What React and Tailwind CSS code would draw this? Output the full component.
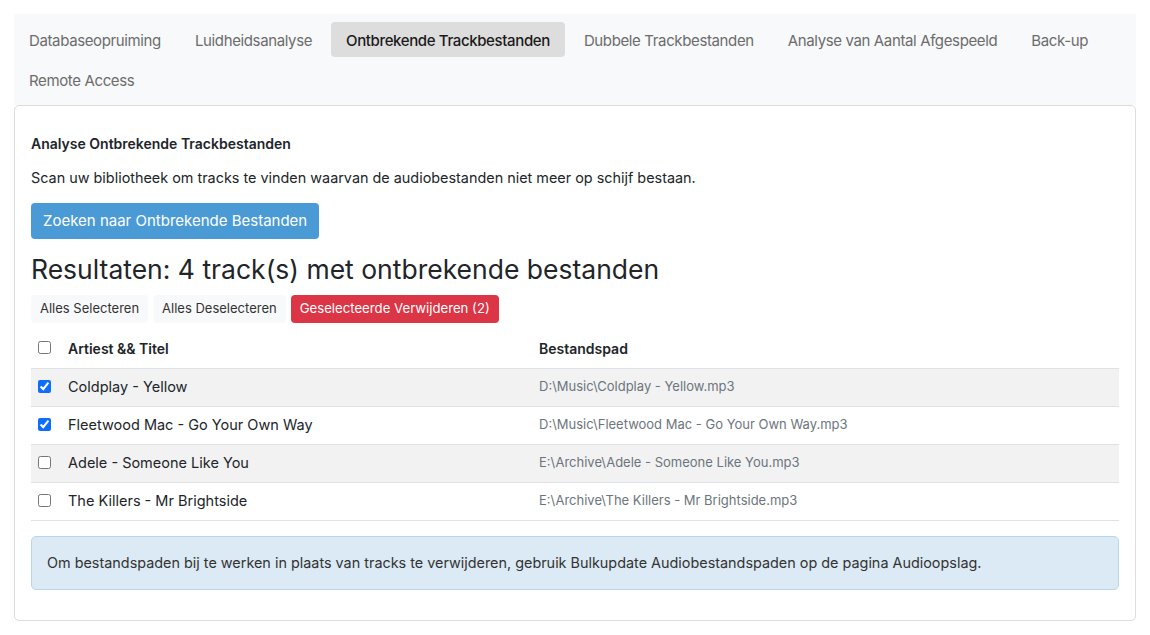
import React from "react";

const TABS = [
  "Databaseopruiming",
  "Luidheidsanalyse",
  "Ontbrekende Trackbestanden",
  "Dubbele Trackbestanden",
  "Analyse van Aantal Afgespeeld",
  "Back-up",
  "Remote Access",
];

const TRACKS = [
  { title: "Coldplay - Yellow", path: "D:\\Music\\Coldplay - Yellow.mp3", checked: true },
  { title: "Fleetwood Mac - Go Your Own Way", path: "D:\\Music\\Fleetwood Mac - Go Your Own Way.mp3", checked: true },
  { title: "Adele - Someone Like You", path: "E:\\Archive\\Adele - Someone Like You.mp3", checked: false },
  { title: "The Killers - Mr Brightside", path: "E:\\Archive\\The Killers - Mr Brightside.mp3", checked: false },
];

const Checkbox = ({ checked }) => (
  <div className="flex items-center pb-[2px]">
    <input
      type="checkbox"
      defaultChecked={checked}
      className="m-0 h-[13px] w-[13px] accent-[#0d6efd]"
    />
  </div>
);

export default function App() {
  const active = "Ontbrekende Trackbestanden";

  return (
    <div className="min-h-screen bg-white p-[14px] font-['Inter','Noto_Sans',sans-serif] text-[#212529]">
      <nav className="flex flex-wrap gap-x-[4px] gap-y-[5px] bg-[#f8f9fa] py-2 pr-2">
        {TABS.map((tab) => (
          <div
            key={tab}
            className={`flex h-[35px] items-center rounded-[4px] px-[15px] pt-[3px] text-[15px] tracking-[-0.37px] ${
              tab === active ? "bg-[#dddddd] font-medium text-[#1a1a1a]" : "text-[#6c6c6c]"
            }`}
          >
            {tab}
          </div>
        ))}
      </nav>

      <div className="rounded-[5px] border border-[#dcdcdc] px-4 pb-[30px] pt-[27px]">
        <h5 className="text-[14px] font-semibold leading-[21px]">Analyse Ontbrekende Trackbestanden</h5>
        <p className="mt-[13px] text-[14.4px] leading-[21px]">
          Scan uw bibliotheek om tracks te vinden waarvan de audiobestanden niet meer op schijf bestaan.
        </p>
        <button className="mt-[15px] h-[36px] rounded-[4px] bg-[#4a9bd5] px-3 pt-[1px] text-[15px] text-white">
          Zoeken naar Ontbrekende Bestanden
        </button>

        <h2 className="mt-[12px] text-[26.5px] leading-[36px]">Resultaten: 4 track(s) met ontbrekende bestanden</h2>

        <div className="mt-[8px] flex gap-[5px]">
          <button className="h-[28px] rounded-[4px] bg-[#f8f9fa] px-[9px] text-[13px] text-[#333]">Alles Selecteren</button>
          <button className="h-[28px] rounded-[4px] bg-[#f8f9fa] px-[9px] text-[13px] text-[#333]">Alles Deselecteren</button>
          <button className="h-[28px] rounded-[4px] bg-[#dc3545] px-[9px] text-[13.2px] text-white">
            Geselecteerde Verwijderen (2)
          </button>
        </div>

        <table className="mt-[7px] w-full border-collapse text-left">
          <thead>
            <tr className="h-[38px] border-b border-[#dee2e6]">
              <th className="w-[37px] pl-[7px]">
                <Checkbox checked={false} />
              </th>
              <th className="w-[471px] text-[14px] font-semibold">Artiest &amp;&amp; Titel</th>
              <th className="text-[14px] font-semibold">Bestandspad</th>
            </tr>
          </thead>
          <tbody>
            {TRACKS.map((track, i) => (
              <tr
                key={track.path}
                className={`h-[38px] border-b border-[#dee2e6] ${i % 2 === 0 ? "bg-[#f2f2f2]" : "bg-white"}`}
              >
                <td className="pl-[7px]">
                  <Checkbox checked={track.checked} />
                </td>
                <td className="text-[14.5px]">{track.title}</td>
                <td className="text-[13px] text-[#6c757d]">{track.path}</td>
              </tr>
            ))}
          </tbody>
        </table>

        <div className="mt-[15px] flex h-[54px] items-center rounded-[5px] border border-[#b7d6ec] bg-[#dbeaf5] px-[15px] text-[14.4px] text-[#333]">
          Om bestandspaden bij te werken in plaats van tracks te verwijderen, gebruik Bulkupdate Audiobestandspaden op de pagina Audioopslag.
        </div>
      </div>
    </div>
  );
}
